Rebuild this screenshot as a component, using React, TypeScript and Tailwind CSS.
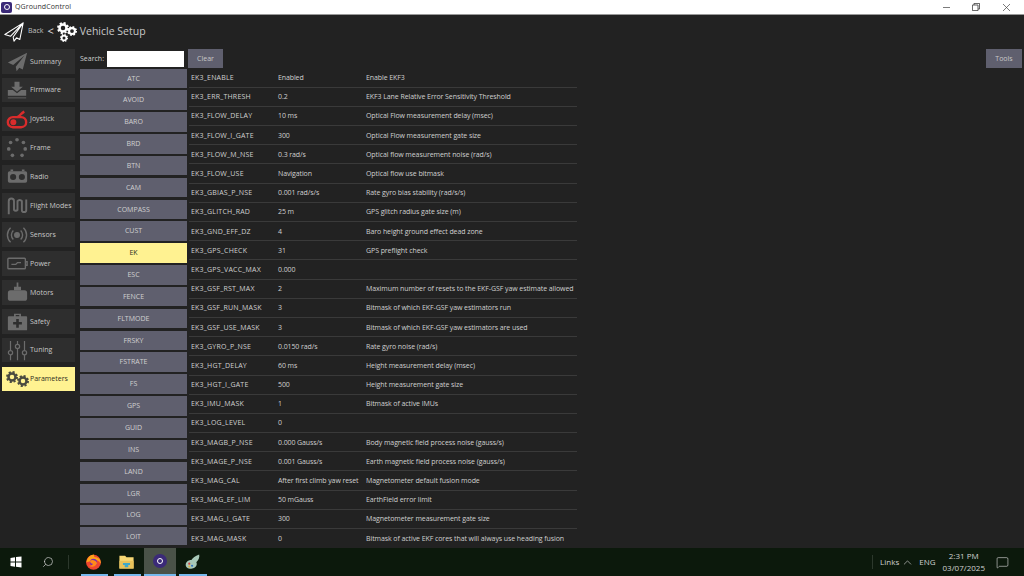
import React from 'react';
import { Search, ChevronUp, MessageSquare } from 'lucide-react';

const groups = ['ATC', 'AVOID', 'BARO', 'BRD', 'BTN', 'CAM', 'COMPASS', 'CUST', 'EK', 'ESC', 'FENCE', 'FLTMODE', 'FRSKY', 'FSTRATE', 'FS', 'GPS', 'GUID', 'INS', 'LAND', 'LGR', 'LOG', 'LOIT'];

const params = [
  ['EK3_ENABLE', 'Enabled', 'Enable EKF3'],
  ['EK3_ERR_THRESH', '0.2', 'EKF3 Lane Relative Error Sensitivity Threshold'],
  ['EK3_FLOW_DELAY', '10 ms', 'Optical Flow measurement delay (msec)'],
  ['EK3_FLOW_I_GATE', '300', 'Optical Flow measurement gate size'],
  ['EK3_FLOW_M_NSE', '0.3 rad/s', 'Optical flow measurement noise (rad/s)'],
  ['EK3_FLOW_USE', 'Navigation', 'Optical flow use bitmask'],
  ['EK3_GBIAS_P_NSE', '0.001 rad/s/s', 'Rate gyro bias stability (rad/s/s)'],
  ['EK3_GLITCH_RAD', '25 m', 'GPS glitch radius gate size (m)'],
  ['EK3_GND_EFF_DZ', '4', 'Baro height ground effect dead zone'],
  ['EK3_GPS_CHECK', '31', 'GPS preflight check'],
  ['EK3_GPS_VACC_MAX', '0.000', ''],
  ['EK3_GSF_RST_MAX', '2', 'Maximum number of resets to the EKF-GSF yaw estimate allowed'],
  ['EK3_GSF_RUN_MASK', '3', 'Bitmask of which EKF-GSF yaw estimators run'],
  ['EK3_GSF_USE_MASK', '3', 'Bitmask of which EKF-GSF yaw estimators are used'],
  ['EK3_GYRO_P_NSE', '0.0150 rad/s', 'Rate gyro noise (rad/s)'],
  ['EK3_HGT_DELAY', '60 ms', 'Height measurement delay (msec)'],
  ['EK3_HGT_I_GATE', '500', 'Height measurement gate size'],
  ['EK3_IMU_MASK', '1', 'Bitmask of active IMUs'],
  ['EK3_LOG_LEVEL', '0', ''],
  ['EK3_MAGB_P_NSE', '0.000 Gauss/s', 'Body magnetic field process noise (gauss/s)'],
  ['EK3_MAGE_P_NSE', '0.001 Gauss/s', 'Earth magnetic field process noise (gauss/s)'],
  ['EK3_MAG_CAL', 'After first climb yaw reset', 'Magnetometer default fusion mode'],
  ['EK3_MAG_EF_LIM', '50 mGauss', 'EarthField error limit'],
  ['EK3_MAG_I_GATE', '300', 'Magnetometer measurement gate size'],
  ['EK3_MAG_MASK', '0', 'Bitmask of active EKF cores that will always use heading fusion'],
];

// solid gear: dashed ring makes the teeth
const Gear = ({ className }: { className: string }) => (
  <svg viewBox="0 0 24 24" className={className} fill="none" stroke="currentColor">
    <circle cx="12" cy="12" r="7" strokeWidth="5" />
    <circle cx="12" cy="12" r="10" strokeWidth="4" strokeDasharray="4.2 3.65" />
  </svg>
);

const railIcons: Record<string, React.ReactNode> = {
  Summary: (
    <svg viewBox="0 0 24 24" className="w-[21px] h-[21px] text-[#6c6c6c]" fill="currentColor">
      <path d="M23 2 1 13l6 3 13-11-10 13 1 5 3-4 4 2z" />
    </svg>
  ),
  Firmware: (
    <svg viewBox="0 0 24 24" className="w-[22px] h-[20px] text-[#6c6c6c]" fill="currentColor">
      <path d="M9 2h6v6h4l-7 6-7-6h4z" />
      <path d="M1 12h6l5 4 5-4h6v7H1z" />
      <path d="M1 21h22v1H1z" />
    </svg>
  ),
  Joystick: (
    <svg viewBox="0 0 24 24" className="w-[24px] h-[22px] text-[#d92c2c]" fill="none" stroke="currentColor" strokeWidth="2.6">
      <rect x="2" y="10" width="20" height="11" rx="5.5" />
      <circle cx="8" cy="15.5" r="2" fill="currentColor" />
      <path d="M12 10c3-1 4-4 8-6" />
    </svg>
  ),
  Frame: (
    <svg viewBox="0 0 24 24" className="w-[22px] h-[22px] text-[#6c6c6c]" fill="currentColor">
      <circle cx="12" cy="3" r="2" /><circle cx="19" cy="6" r="2" /><circle cx="21" cy="13" r="2" /><circle cx="17.5" cy="20" r="2" />
      <circle cx="5" cy="6" r="2" /><circle cx="3" cy="13" r="2" /><circle cx="7" cy="20" r="2" />
    </svg>
  ),
  Radio: (
    <svg viewBox="0 0 24 24" className="w-[21px] h-[21px] text-[#6c6c6c]" fill="currentColor">
      <path fillRule="evenodd" d="M3 6h18a2 2 0 0 1 2 2v9a2 2 0 0 1-2 2H3a2 2 0 0 1-2-2V8a2 2 0 0 1 2-2zm4 3a3.500 3.500 0 1 0 0 7 3.500 3.500 0 0 0 0-7zm10 0a3.500 3.500 0 1 0 0 7 3.500 3.500 0 0 0 0-7z" />
      <path d="M4 4h3v2H4zM17 4h3v2h-3z" />
    </svg>
  ),
  'Flight Modes': (
    <svg viewBox="0 0 24 24" className="w-[21px] h-[21px] text-[#6c6c6c]" fill="none" stroke="currentColor" strokeWidth="2.2">
      <path d="M2 22V7a3 3 0 0 1 6 0v10a2.500 2.500 0 0 0 4 0V7a3 3 0 0 1 5 0v10a2.500 2.500 0 0 0 5 0V5" />
    </svg>
  ),
  Sensors: (
    <svg viewBox="0 0 24 24" className="w-[22px] h-[22px] text-[#6c6c6c]" fill="none" stroke="currentColor" strokeWidth="1.5">
      <circle cx="12" cy="12" r="2.500" fill="currentColor" />
      <path d="M8 7a7 7 0 0 0 0 10M16 7a7 7 0 0 1 0 10M5 4a11 11 0 0 0 0 16M19 4a11 11 0 0 1 0 16" />
    </svg>
  ),
  Power: (
    <svg viewBox="0 0 24 24" className="w-[21px] h-[21px] text-[#6c6c6c]" fill="none" stroke="currentColor" strokeWidth="1.6">
      <rect x="1" y="6" width="20" height="12" rx="1" />
      <path d="M21 10h2v4h-2M5 13h5l2-2h4" />
    </svg>
  ),
  Motors: (
    <svg viewBox="0 0 24 24" className="w-[21px] h-[22px] text-[#6c6c6c]" fill="currentColor">
      <path d="M11 1h2v5h-2zM8 6h8v4H8z" />
      <rect x="1" y="10" width="22" height="12" rx="3" />
    </svg>
  ),
  Safety: (
    <svg viewBox="0 0 24 24" className="w-[21px] h-[21px] text-[#6c6c6c]" fill="currentColor">
      <path fillRule="evenodd" d="M8 3h8v3h6a1 1 0 0 1 1 1v14a1 1 0 0 1-1 1H2a1 1 0 0 1-1-1V7a1 1 0 0 1 1-1h6zm2 1.500V6h4V4.500zM10.500 9v3.500H7v3h3.500V19h3v-3.500H17v-3h-3.500V9z" />
    </svg>
  ),
  Tuning: (
    <svg viewBox="0 0 24 24" className="w-[21px] h-[23px] text-[#6c6c6c]" fill="none" stroke="currentColor" strokeWidth="1.4">
      <path d="M4 1v11M4 17v6M12 1v4M12 10v13M20 1v11M20 17v6" />
      <circle cx="4" cy="14.500" r="2.400" /><circle cx="12" cy="7.500" r="2.400" /><circle cx="20" cy="14.500" r="2.400" />
    </svg>
  ),
  Parameters: (
    <div className="flex items-center text-[#4a4a40]">
      <Gear className="w-[12px] h-[12px] -mr-[1px] -mt-[4px]" />
      <Gear className="w-[12px] h-[12px] mt-[4px]" />
    </div>
  ),
};

const RailButton = ({ label }: { label: string }) => {
  const active = label === 'Parameters';
  return (
    <div className={`h-[24.5px] w-[73px] shrink-0 flex items-center ${active ? 'bg-[#fff291] text-[#2c2c22]' : 'bg-[#2e2e2e] text-[#c8c8c8]'}`}>
      <div className="w-[28px] pl-[2px] shrink-0 flex justify-center">{railIcons[label]}</div>
      <span className="pt-[1px] whitespace-nowrap text-[7px]">{label}</span>
    </div>
  );
};

const App = () => {
  return (
    <div className="w-[1024px] h-[576px] flex flex-col overflow-hidden bg-[#222222] text-[#d0d0d0] font-['Open_Sans',sans-serif]">
      {/* Window title bar */}
      <div className="h-[15px] shrink-0 bg-white flex items-center text-[#333] border-b border-[#999]">
        <div className="ml-[1px] w-[11px] h-[11px] rounded-[2px] bg-[#3b2a78] flex items-center justify-center">
          <div className="w-[6px] h-[6px] rounded-full border border-white" />
        </div>
        <span className="ml-[3px] text-[7px] tracking-[0.1px]">QGroundControl</span>
        <div className="ml-auto flex items-center text-[#444]">
          <svg viewBox="0 0 10 10" className="w-[7px] h-[7px] mr-[22px]" stroke="currentColor" fill="none"><path d="M0 5h10" /></svg>
          <svg viewBox="0 0 10 10" className="w-[8px] h-[8px] mr-[23px]" stroke="currentColor" fill="none" strokeWidth="1.1"><path d="M.5 2.500h7v7h-7zM2.500 2.500V.5h7v7h-2" /></svg>
          <svg viewBox="0 0 10 10" className="w-[7px] h-[7px] mr-[14px]" stroke="currentColor" fill="none"><path d="M0 0l10 10M10 0 0 10" /></svg>
        </div>
      </div>

      {/* Toolbar */}
      <div className="h-[34px] shrink-0 flex items-center pl-[4px] pb-[1px]">
        <svg viewBox="0 0 24 24" className="w-[20px] h-[20px] text-white" fill="none" stroke="currentColor" strokeWidth="1.3" strokeLinejoin="round">
          <path d="M23 1 1 15l7 2 15-16-12 17 1 5 3-4 4 2z" />
        </svg>
        <span className="ml-[4px] text-[7px] text-[#c0c0c0]">Back</span>
        <span className="ml-[4px] text-[11px] text-[#e0e0e0]">&lt;</span>
        <div className="ml-[3px] w-[20px] h-[20px] relative text-white">
          <Gear className="absolute left-0 top-0 w-[12px] h-[12px]" />
          <Gear className="absolute right-0 top-[4px] w-[10px] h-[10px]" />
          <Gear className="absolute left-[3px] bottom-0 w-[8px] h-[8px]" />
        </div>
        <span className="ml-[3px] text-[10.500px] text-[#c8c8c8]">Vehicle Setup</span>
      </div>

      <div className="flex-1 min-h-0 flex">
        {/* Setup rail */}
        <div className="w-[80px] shrink-0 pl-[2px] flex flex-col gap-[4.4px]">
          {['Summary', 'Firmware', 'Joystick', 'Frame', 'Radio', 'Flight Modes', 'Sensors', 'Power', 'Motors', 'Safety', 'Tuning', 'Parameters'].map((label) => (
            <RailButton key={label} label={label} />
          ))}
        </div>

        {/* Parameter editor */}
        <div className="flex-1 min-w-0 flex flex-col">
          <div className="h-[19px] shrink-0 flex items-center">
            <span className="w-[27px] pt-[1px] shrink-0 text-[7px]">Search:</span>
            <div className="w-[77px] h-[16px] bg-white" />
            <div className="ml-[4px] w-[35px] h-[19px] pt-[1px] bg-[#5f5f6e] flex items-center justify-center text-[7px] text-[#c8c8c8]">Clear</div>
            <div className="ml-auto mr-[2px] w-[36px] h-[19px] pt-[1px] bg-[#5f5f6e] flex items-center justify-center text-[7px] text-[#c8c8c8]">Tools</div>
          </div>
          <div className="flex-1 min-h-0 mb-[3px] flex overflow-hidden">
            <div className="w-[107px] pt-[0.5px] shrink-0 flex flex-col gap-[2.35px]">
              {groups.map((g) => (
                <div key={g} className={`h-[19.5px] pt-[1px] shrink-0 flex items-center justify-center text-[7px] ${g === 'EK' ? 'bg-[#fff291] text-[#2c2c22]' : 'bg-[#5f5f6e] text-[#d0d0d0]'}`}>{g}</div>
              ))}
            </div>
            <div className="ml-[2px] pt-[0.5px] w-[388px] shrink-0 flex flex-col">
              {params.map(([name, value, desc]) => (
                <div key={name} className="h-[19.2px] pt-[1.5px] shrink-0 flex items-center border-b border-[#3a3a3a] pl-[2px] text-[7px] whitespace-nowrap">
                  <span className="w-[87px] shrink-0 tracking-[0.2px]">{name}</span>
                  <span className="w-[88px] shrink-0 tracking-[-0.1px]">{value}</span>
                  <span className="tracking-[-0.08px]">{desc}</span>
                </div>
              ))}
            </div>
          </div>
        </div>
      </div>

      {/* Windows taskbar */}
      <div className="h-[28px] shrink-0 bg-[#0c190c] flex items-center text-[#d0d0d0]">
        <svg viewBox="0 0 24 24" className="ml-[10px] w-[12px] h-[12px] text-white" fill="currentColor">
          <path d="M1 4l9-1.500V11H1zM12 2.200 23 1v10H12zM1 13h9v8.500L1 20zM12 13h11v10l-11-1.500z" />
        </svg>
        <Search className="ml-[20px] w-[12px] h-[12px] -scale-x-100" strokeWidth={1.4} />
        <div className="ml-[14px] w-[1px] h-[14px] bg-[#2c382c]" />
        <div className="ml-[12px] w-[27px] h-[28px] pr-[2px] border-b-2 border-[#76b9ed] flex items-center justify-center">
          <svg viewBox="0 0 24 24" className="w-[17px] h-[17px]">
            <circle cx="12" cy="13" r="10.500" fill="#f0452f" />
            <path d="M2 13C3 6 8 2 13 2c-1 2 0 3 1 4 5 0 9 3 8 9-2-4-5-5-8-5z" fill="#ffa31a" />
            <circle cx="12" cy="13" r="5" fill="#7a2bb0" />
            <path d="M7 11c3-2 8-1 10 3-1 5-7 7-12 4 3 0 6-1 6-3-2 0-4-1-4-4z" fill="#ff8a1a" />
          </svg>
        </div>
        <div className="ml-[6px] w-[27px] h-[28px] pr-[2px] border-b-2 border-[#76b9ed] flex items-center justify-center">
          <svg viewBox="0 0 24 24" className="w-[17px] h-[17px]">
            <path d="M2 4h8l2 2h10v16H2z" fill="#f7d774" />
            <path d="M2 11h20v11H2z" fill="#e8c25a" />
            <path d="M7 14h10v3h-2.500v3h-5v-3H7z" fill="#3fa8c8" />
          </svg>
        </div>
        <div className="ml-[3px] w-[32px] h-[28px] bg-[#4a5248] border-b-2 border-[#76b9ed] flex items-center justify-center">
          <div className="w-[14px] h-[14px] rounded-full bg-[#3b2a78] flex items-center justify-center">
            <div className="w-[6px] h-[6px] rounded-full border border-white" />
          </div>
        </div>
        <div className="ml-[3px] w-[28px] h-[28px] border-b-2 border-[#76b9ed] flex items-center justify-center">
          <svg viewBox="0 0 24 24" className="w-[17px] h-[17px]">
            <path d="M20 2c-6 2-9 5-11 8C4 10 1 13 1 17c0 4 5 6 9 5 5-1 8-5 6-9 3-3 5-7 4-11z" fill="#a8c8b8" />
            <circle cx="6" cy="15" r="1.500" fill="#d04040" /><circle cx="10" cy="18" r="1.500" fill="#3070c0" /><circle cx="6" cy="19" r="1.500" fill="#e0b040" />
          </svg>
        </div>
        <div className="ml-auto flex items-center">
          <div className="w-[1px] h-[14px] bg-[#2c382c]" />
          <span className="ml-[7px] text-[8px]">Links</span>
          <ChevronUp className="ml-[2px] w-[13px] h-[13px]" strokeWidth={1.2} />
          <span className="ml-[5px] text-[8px]">ENG</span>
          <div className="ml-[7px] flex flex-col items-center text-[8px] leading-[12px]">
            <span>2:31 PM</span>
            <span>03/07/2025</span>
          </div>
          <MessageSquare className="ml-[11px] mr-[15px] w-[13px] h-[13px]" strokeWidth={1.2} />
        </div>
      </div>
    </div>
  );
};

export default App;
